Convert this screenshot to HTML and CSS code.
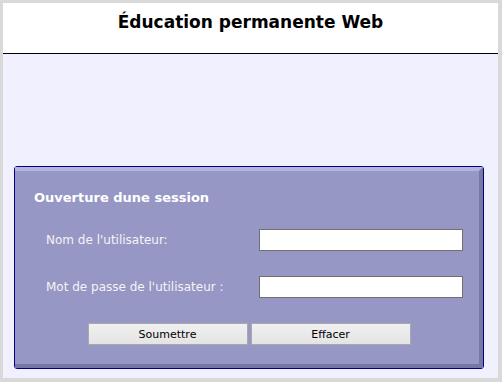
FILE: index.html
```html
<!DOCTYPE html>
<html lang="fr">
<head>
    <meta charset="UTF-8">
    <title>Éducation permanente Web</title>
    <link rel="stylesheet" href="styles.css">
</head>
<body>
<div class="frame">
    <div class="header">
        <h1>Éducation permanente Web</h1>
    </div>
    <div class="content">
        <div class="panel">
            <form class="panel-inner" id="loginForm">
                <h2>Ouverture dune session</h2>
                <div class="row">
                    <label for="user">Nom de l'utilisateur:</label>
                    <input type="text" id="user">
                </div>
                <div class="row">
                    <label for="pass">Mot de passe de l'utilisateur :</label>
                    <input type="password" id="pass">
                </div>
                <div class="buttons">
                    <button type="submit">Soumettre</button>
                    <button type="reset">Effacer</button>
                </div>
            </form>
        </div>
    </div>
</div>
</body>
</html>
```

FILE: styles.css
```css
html, body {
    margin: 0;
    height: 100%;
}
body {
    background: #d9d9d9;
    font-family: "DejaVu Sans", Verdana, sans-serif;
}
.frame {
    box-sizing: border-box;
    height: 100%;
    padding: 3px 4px 4px 3px;
    display: flex;
    flex-direction: column;
}
.header {
    background: #fff;
    height: 50px;
    border-bottom: 1px solid #000;
}
.header h1 {
    margin: 0;
    padding-top: 9px;
    text-align: center;
    font-size: 17px;
    font-weight: bold;
    color: #000;
}
.content {
    flex: 1;
    background: #f0f0ff;
    padding: 112px 14px 0 11px;
}
.panel {
    border: 1px solid #000080;
    border-radius: 3px;
}
.panel-inner {
    margin: 0;
    background: #9797c6;
    border-top: 4px solid #b3b3dc;
    border-right: 4px solid #7777a5;
    border-bottom: 4px solid #7777a5;
    padding: 18px 0 0 19px;
    height: 201px;
    box-sizing: border-box;
}
.panel-inner h2 {
    margin: 0 0 22px;
    font-size: 13px;
    font-weight: bold;
    color: #fff;
    line-height: 18px;
}
.row {
    display: flex;
    align-items: center;
    padding-left: 12px;
    margin-bottom: 25px;
}
.row label {
    width: 213px;
    font-size: 12px;
    color: #f4f4f4;
}
.row input {
    box-sizing: border-box;
    width: 204px;
    height: 22px;
    margin: 0;
    border: 1px solid #707070;
    background: #fff;
}
.buttons {
    display: flex;
    justify-content: center;
    gap: 3px;
    margin-left: -15px;
}
.buttons button {
    width: 160px;
    height: 22px;
    margin: 0;
    border: 1px solid #a9a9a9;
    background: linear-gradient(#f0f0f0, #e4e4e4);
    font-family: "DejaVu Sans", Verdana, sans-serif;
    font-size: 11px;
    color: #000;
}
```
